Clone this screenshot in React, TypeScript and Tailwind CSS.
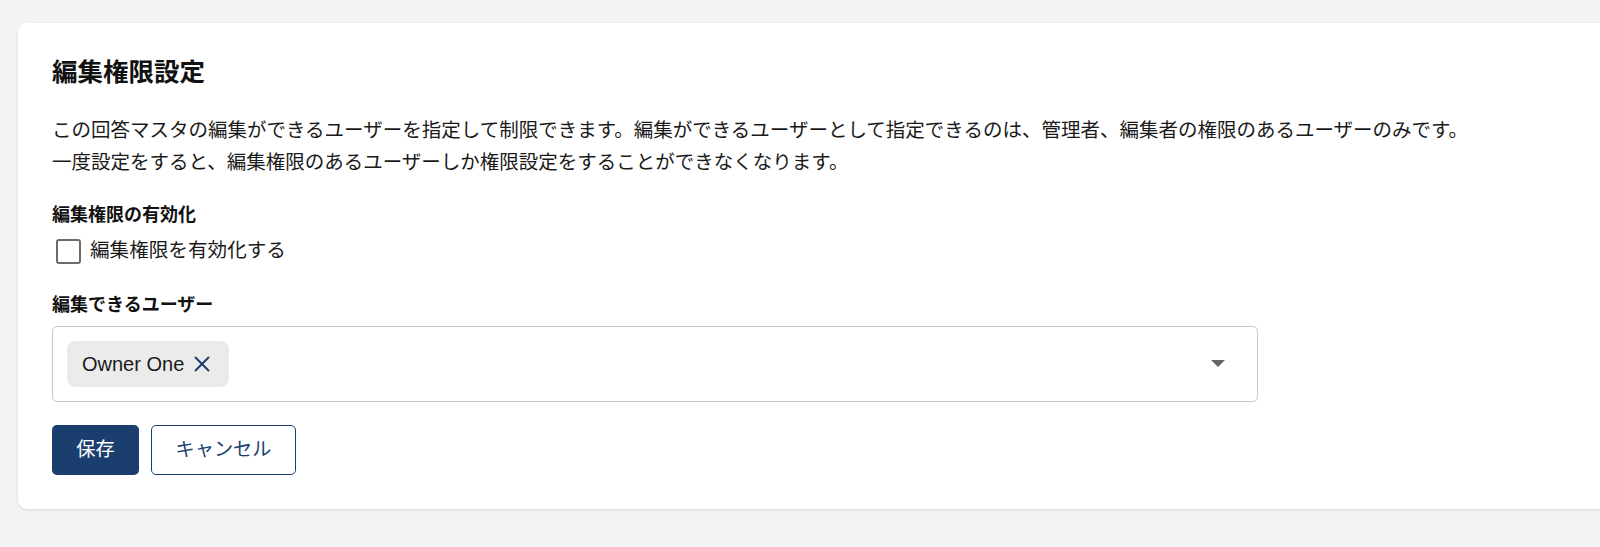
import React, { useState } from 'react';
import { X } from 'lucide-react';

const font = { fontFamily: '"Liberation Sans", "Noto Sans CJK JP", sans-serif' };

export default function App() {
  const [enabled, setEnabled] = useState(false);
  const [users, setUsers] = useState(['Owner One']);

  return (
    <div className="min-h-screen w-full overflow-hidden bg-[#f3f3f3] pt-[23px] pl-[18px]" style={font}>
      <div className="w-[1620px] rounded-[9px] bg-white pl-[34px] pt-[31px] pb-[34px] shadow-[0_1px_3px_rgba(0,0,0,0.12)]">
        <h2 className="text-[25.5px] leading-[36px] font-bold text-[#111]">編集権限設定</h2>

        <div className="mt-[24px] text-[19.5px] leading-[32px] text-[#1a1a1a]">
          <p>この回答マスタの編集ができるユーザーを指定して制限できます。編集ができるユーザーとして指定できるのは、管理者、編集者の権限のあるユーザーのみです。</p>
          <p>一度設定をすると、編集権限のあるユーザーしか権限設定をすることができなくなります。</p>
        </div>

        <div className="mt-[24px] text-[18px] leading-[27px] font-bold text-[#111]">編集権限の有効化</div>
        <label className="mt-[6px] flex h-[32px] items-center gap-[9px] pl-[4px] cursor-pointer">
          <span
            onClick={() => setEnabled(!enabled)}
            className="flex h-[25px] w-[25px] items-center justify-center rounded-[3px] border-2 border-[#6b6b6b] bg-white"
          >
            {enabled && <span className="h-[13px] w-[13px] bg-[#1a3f6f]" />}
          </span>
          <span className="text-[19.6px] text-[#1a1a1a]">編集権限を有効化する</span>
        </label>

        <div className="mt-[25px] text-[18px] leading-[27px] font-bold text-[#111]">編集できるユーザー</div>
        <div className="mt-[7px] flex h-[76px] w-[1206px] items-center justify-between rounded-[5px] border border-[#c8c8c8] pl-[14px] pr-[32px]">
          <div className="flex items-center gap-2">
            {users.map((u) => (
              <div key={u} className="flex h-[46px] items-center rounded-[8px] bg-[#ebebeb] pl-[15px] pr-[14px]">
                <span className="text-[20px] text-[#1a1a1a]">{u}</span>
                <button
                  onClick={() => setUsers(users.filter((x) => x !== u))}
                  className="ml-[5px] flex h-[26px] w-[26px] items-center justify-center text-[#1a3f6f]"
                >
                  <X size={26} strokeWidth={1.8} />
                </button>
              </div>
            ))}
          </div>
          <svg width="14" height="8" viewBox="0 0 14 8">
            <path d="M0 0 L14 0 L7 7 Z" fill="#666" />
          </svg>
        </div>

        <div className="mt-[23px] flex gap-[12px]">
          <button className="h-[50px] w-[87px] rounded-[5px] bg-[#1a3f6f] text-[19.2px] text-white">保存</button>
          <button className="h-[50px] w-[145px] rounded-[5px] border border-[#1a3f6f] bg-white text-[19.2px] text-[#1a3f6f]">キャンセル</button>
        </div>
      </div>
    </div>
  );
}
